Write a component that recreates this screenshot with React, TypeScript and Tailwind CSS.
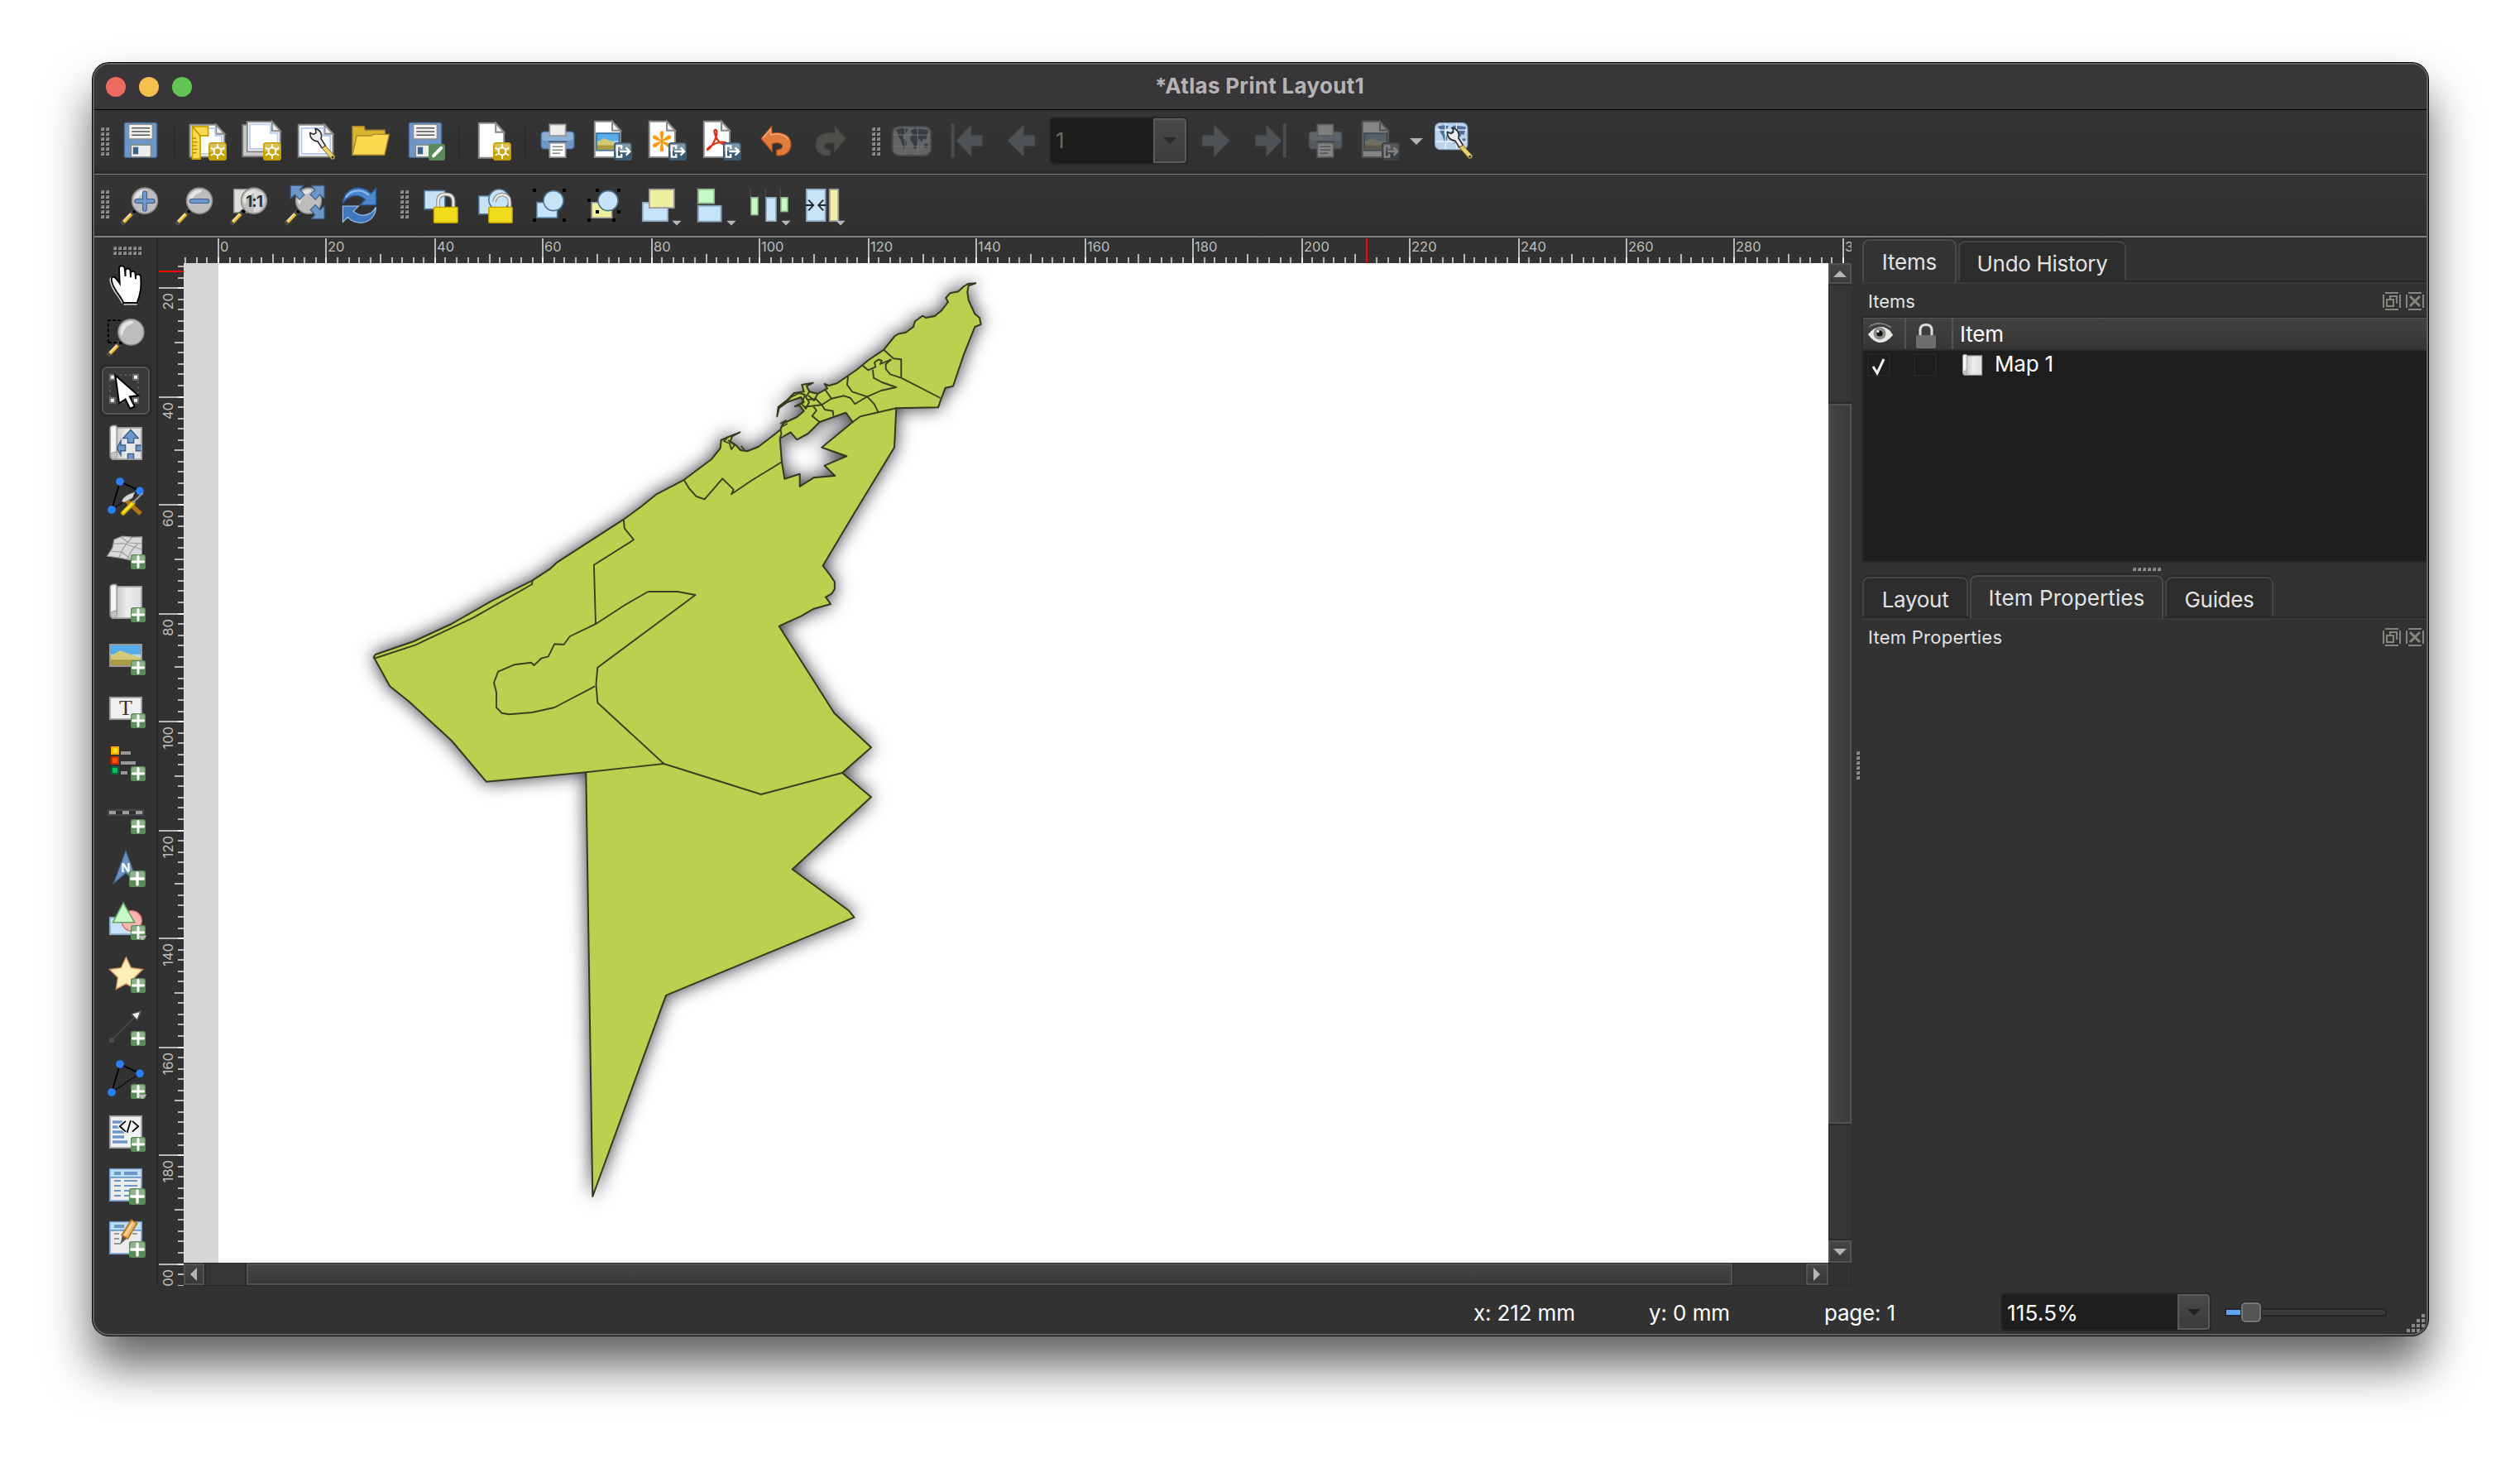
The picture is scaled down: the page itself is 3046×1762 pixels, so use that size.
import type { ReactNode } from "react";

/* ---------- icon building blocks (24-unit grid, shown at 48px) ---------- */

function Ico({ children, dim }: { children: ReactNode; dim?: boolean }) {
  return (
    <svg viewBox="0 0 24 24" className={dim ? "h-12 w-12 shrink-0 overflow-visible opacity-40 grayscale-[60%]" : "h-12 w-12 shrink-0 overflow-visible"}>
      {children}
    </svg>
  );
}

function Dots({ cols, rows }: { cols: number; rows: number }) {
  const cells = [];
  for (let r = 0; r < rows; r++)
    for (let c = 0; c < cols; c++)
      cells.push(
        <g key={r + "-" + c}>
          <rect x={c * 6} y={r * 6} width={4} height={4} fill="#8e8e8e" />
          <rect x={c * 6} y={r * 6} width={2} height={2} fill="#6a6a6a" />
        </g>
      );
  return (
    <svg width={cols * 6 - 2} height={rows * 6 - 2} className="shrink-0">
      {cells}
    </svg>
  );
}

const PlusBadge = ({ big }: { big?: boolean }) => (
  <g transform={big ? "translate(14 14) scale(1.1111)" : "translate(15 15)"}>
    <rect width="9" height="9" rx="1.4" fill="#598c59" />
    <path d="M.6 5V1.6Q.6.6 1.6.6H7.4Q8.4.6 8.4 1.6V4Z" fill="#8fb18c" />
    <path d="M4.5 1.3V7.7M1.2 4.5H7.8" stroke="#fff" strokeWidth="1.5" strokeLinecap="round" />
  </g>
);

const NewBadge = () => (
  <g transform="translate(13 13)">
    <rect width="11" height="11" rx="1.8" fill="#c4a000" />
    <path d="M.8 5.8V2Q.8.8 2 .8H9Q10.2.8 10.2 2V5Z" fill="#d9c05a" />
    <path d="M5.5 1V10M1.4 3.3L9.6 7.9M9.6 3.3L1.4 7.9" stroke="#fff" strokeWidth=".9" />
    <circle cx="5.5" cy="5.5" r="2.2" fill="#c9aa20" stroke="#fff" strokeWidth="1" />
  </g>
);

const ExportBadge = () => (
  <g transform="translate(13 13)">
    <rect width="11" height="11" rx="1.8" fill="#3b5a72" />
    <path d="M.8 5.5V2Q.8.8 2 .8H9Q10.2.8 10.2 2V4.5Z" fill="#7d95a6" />
    <path d="M4.6 4V2.2H1.9V8.8H4.6V7M3.6 5.5H9.6M7.3 3.2L9.6 5.5L7.3 7.8" fill="none" stroke="#fff" strokeWidth="1.2" />
  </g>
);

const Save = () => (
  <>
    <rect x="2.2" y="1.2" width="19.6" height="21" rx="1.2" fill="#6c97c8" stroke="#4a6d98" strokeWidth=".7" />
    <rect x="4.8" y="2.2" width="14.4" height="8.8" rx=".6" fill="#f0f0ee" stroke="#8a8a88" strokeWidth=".7" />
    <path d="M6.6 4.4H17.6M6.6 6.5H17.6M6.6 8.6H17.6" stroke="#555" strokeWidth=".8" />
    <rect x="6.2" y="14.6" width="12" height="7.2" rx=".5" fill="#eeeeec" stroke="#888a85" strokeWidth=".7" />
    <rect x="7.4" y="15.8" width="3.2" height="4.4" fill="#3d6288" />
  </>
);

const Page = ({ x, y, w, h }: { x: number; y: number; w: number; h: number }) => (
  <>
    <path d={`M${x} ${y}H${x + w - 5}L${x + w} ${y + 5.5}V${y + h}H${x}Z`} fill="#fff" stroke="#8a8a8a" strokeWidth="1" />
    <path d={`M${x + w - 5} ${y}V${y + 5.5}H${x + w}Z`} fill="#eee" stroke="#8a8a8a" strokeWidth="1" />
  </>
);

const Wrench = ({ t }: { t: string }) => (
  <g transform={t}>
    <path d="M-3.6 -1.6L-1.4 -.6L0 -1.6L-.4 -4.1A4.6 4.6 0 0 1 3 2L5.8 6.4L3.6 7.7L1 3.6A4.6 4.6 0 0 1 -3.6 -1.6Z" fill="#efefef" stroke="#2e2e2e" strokeWidth=".8" />
    <path d="M3.6 7.7L5.8 6.4L11.4 12.6Q11.6 14.6 9.4 14.4Z" fill="#e9d16c" stroke="#7c6a25" strokeWidth=".5" />
    <circle cx="10" cy="13.2" r=".7" fill="#222" />
  </g>
);

const Printer = () => (
  <>
    <rect x="2" y="6.5" width="20" height="10.5" rx="2" fill="#6c97c8" stroke="#456a96" strokeWidth=".6" />
    <rect x="2.6" y="7" width="18.8" height="5" rx="1.2" fill="#8db0d8" />
    <rect x="7.2" y="2.2" width="9.6" height="6.8" fill="#eee" stroke="#999" strokeWidth=".9" />
    <path d="M6.5 12.8H17.5" stroke="#3c5677" strokeWidth="1" />
    <rect x="7.2" y="13.4" width="9.6" height="8.6" fill="#fff" stroke="#999" strokeWidth=".9" />
    <path d="M8.8 15.6H15.2M8.8 17.6H15.2M8.8 19.6H13.6" stroke="#888" strokeWidth=".8" />
  </>
);

const Picture = ({ x, y, w, h }: { x: number; y: number; w: number; h: number }) => (
  <>
    <rect x={x} y={y} width={w} height={h} fill="#55aeea" />
    <rect x={x} y={y + h * 0.45} width={w} height={h * 0.25} fill="#b7d9ee" />
    <path d={`M${x} ${y + h * 0.52}L${x + w * 0.3} ${y + h * 0.26}L${x + w} ${y + h * 0.62}V${y + h}H${x}Z`} fill="#d3c878" />
    <path d={`M${x} ${y + h * 0.72}H${x + w}V${y + h}H${x}Z`} fill="#ab9940" />
  </>
);

const ImagePage = () => (
  <>
    <Page x={1.4} y={0.4} w={15.6} h={21.6} />
    <rect x="2.1" y="7.1" width="14.6" height="11.2" fill="#3e6f9a" />
    <Picture x={3} y={8} w={12.8} h={9.4} />
    <ExportBadge />
  </>
);

const Magnifier = () => (
  <>
    <path d="M1.4 22.6L8 15.8" stroke="#4b4b4b" strokeWidth="3" strokeLinecap="round" />
    <path d="M1.8 22.2L6.4 17.4" stroke="#f5c32c" strokeWidth="1.8" />
    <path d="M1.4 21.6L5.8 17" stroke="#fde9c0" strokeWidth=".7" />
    <circle cx="8.2" cy="15.8" r="1.1" fill="#000" />
    <circle cx="14.5" cy="9.3" r="7.8" fill="#bdbdbd" stroke="#8a8a8a" strokeWidth=".7" />
    <path d="M8 9A6.5 6.5 0 0 1 15 2.6Q17 2.8 15 4.4Q10 6 9.4 11Q8.4 12 8 9Z" fill="#e4e4e4" />
  </>
);

const Continents = ({ fill }: { fill: string }) => (
  <path
    d="M2 5.5L6 4.4L10 5L8.5 7.4L7 8.6L6.6 10.4L8.6 12L9 14L7.4 17.6L6.4 14.5L5.4 11.5L4 9.5L3.6 7ZM11.4 6L14 4.6L18 5L22 5.6L21.4 9L20.4 11.5L19 10.5L18 13L16.8 10.8L15.6 12.8L15 16L13.6 17.6L12.8 13.6L11.4 12L11.2 9.6L12.4 8.2ZM19.4 14L21.6 13.6L22 16L20 16.4Z"
    fill={fill}
  />
);

const Roll = () => (
  <>
    <defs>
      <linearGradient id="paper" x1="0" x2="1">
        <stop offset="0" stopColor="#bdbdbd" />
        <stop offset=".5" stopColor="#ececec" />
        <stop offset="1" stopColor="#dedede" />
      </linearGradient>
    </defs>
    <path d="M6 2.4H21.6V21.6H4Z" fill="url(#paper)" stroke="#9a9a9a" strokeWidth=".9" />
    <path d="M2.6 2.2Q3.4.8 6 1.2L6.6 2V17Q3.6 17.4 3.6 19.2Q3.6 21 6 21.4H4Q2.6 21 2.6 19Z" fill="#f4f4f4" stroke="#9a9a9a" strokeWidth=".8" />
    <path d="M2.8 19Q3 17 6.4 17.2Q7.4 18.6 6.2 20.4Q5 22 3.6 21.2Z" fill="#c4c4c4" stroke="#999" strokeWidth=".5" />
  </>
);

const Triangle = ({ cls }: { cls: string }) => (
  <svg viewBox="0 0 16 8" className={cls}>
    <path d="M0 0H16L8 8Z" fill="currentColor" />
  </svg>
);

const MenuMark = () => <path d="M19.2 21.4H24.8L22 24.2Z" fill="#b9b9b9" />;

const arrowL = "M4.2 12L13.6 2.4V8.8H20.4V15.2H13.6V21.6Z";
const BL = "#c6e3f8";
const BS = "#86a6bd";

const NodeShape = () => (
  <>
    <path d="M20.5 8.7L8.5 3L3.5 20" fill="none" stroke="#000" strokeWidth=".9" />
    <path d="M3.5 20L20.5 8.7" stroke="#000" strokeWidth=".9" strokeDasharray=".9 .7" />
    <circle cx="8.5" cy="3" r="2.4" fill="#2a7fff" />
    <circle cx="20.5" cy="8.7" r="2.4" fill="#2a7fff" />
    <circle cx="3.5" cy="20" r="2.4" fill="#2a7fff" />
  </>
);

const Handles = ({ pts }: { pts: number[][] }) => (
  <>
    {pts.map(([x, y]) => (
      <rect key={x + "," + y} x={x - 1} y={y - 1} width="2" height="2" fill="#000" />
    ))}
  </>
);

const Sep = () => <div className="mr-3.5 ml-4 h-[38px] w-0.5 shrink-0 bg-[#2a2a2a]" />;

/* ------------------------------ toolbars ------------------------------ */

function MainToolbar() {
  return (
    <div className="flex h-[74px] shrink-0 items-center bg-linear-to-b from-[#353535] to-[#303030] pl-2">
      <div className="mt-0.5 mr-3.5">
        <Dots cols={2} rows={6} />
      </div>
      <Ico><Save /></Ico>
      <Sep />
      <div className="flex gap-[18px]">
        <Ico>
          <Page x={1.8} y={2.4} w={20.8} h={19.4} />
          <path d="M4 4.5H17V9H21V20H4Z" fill="none" stroke="#bccdf4" strokeWidth=".9" />
          <path d="M3.2 3.4H12.8V9H8V23H3.2Z" fill="#fbd94e" stroke="#c9a300" strokeWidth=".9" />
          <path d="M3.4 3.6L8 9M3.4 10.6H5.6M3.4 12.8H6.4M3.4 15H5.6M3.4 17.2H6.4M3.4 19.4H5.6" stroke="#b08e00" strokeWidth=".7" />
          <NewBadge />
        </Ico>
        <Ico>
          <rect x=".6" y="2.4" width="18" height="19.2" fill="#c9c9c9" stroke="#777" strokeWidth=".9" />
          <Page x={3.4} y={0.6} w={20} h={18} />
          <path d="M5 2.2H17.4V7.4H21.8V17H5Z" fill="none" stroke="#bccdf4" strokeWidth=".9" />
          <NewBadge />
        </Ico>
        <Ico>
          <Page x={1.4} y={2.4} w={20.8} h={19.4} />
          <path d="M3.2 4.4H16.6V9H20.6V20H3.2Z" fill="none" stroke="#b4c8f4" strokeWidth=".9" />
          <Wrench t="translate(12 8.8)" />
        </Ico>
        <Ico>
          <path d="M1 20.6V3.4H8L8.6 5.6H20.6V9" fill="#dcb52f" stroke="#a8862a" strokeWidth=".7" />
          <path d="M1 20.6L3.6 9H12.5L13.6 8.2H23.2L20.4 20.6Z" fill="#fbd950" stroke="#a8862a" strokeWidth=".7" />
        </Ico>
        <Ico>
          <Save />
          <rect x="14" y="14" width="10" height="10" rx="1.6" fill="#598c59" />
          <path d="M17 21.2L21.6 16.4" stroke="#fff" strokeWidth="2" strokeLinecap="round" />
        </Ico>
      </div>
      <Sep />
      <Ico>
        <Page x={4.4} y={1.4} w={15.2} h={21} />
        <NewBadge />
      </Ico>
      <Sep />
      <div className="flex gap-[18px]">
        <Ico><Printer /></Ico>
        <Ico><ImagePage /></Ico>
        <Ico>
          <Page x={1.4} y={0.4} w={15.6} h={21.6} />
          {[0, 60, 120, 180, 240, 300].map((a) => (
            <g key={a} transform={`rotate(${a} 9 12.4)`}>
              <path d="M8.7 12.4L7.9 8.2A1.2 1.5 0 1 1 10.1 8.2L9.3 12.4Z" fill="#ff9a0c" />
            </g>
          ))}
          <ExportBadge />
        </Ico>
        <Ico>
          <Page x={1.4} y={0.4} w={15.6} h={21.6} />
          <path d="M3.2 17.8C6 16.4 9.4 10 9.2 6.6C9 4.8 7.4 5.2 7.8 7C8.4 10.4 11 14.6 14.8 14.4C17 14 14 12.2 10.6 13C7 13.8 3.6 16.4 3.2 17.8" fill="none" stroke="#ea2a12" strokeWidth="1.1" />
          <ExportBadge />
        </Ico>
        <Ico>
          <path d="M3 10.8L9.4 3.2V7.6C16 6.4 21 9 21 14.2C21 19 17 21.6 12.4 20.8V17.6C15.6 17.6 17.4 14.8 14.4 13.6C13 13 11.2 13.4 9.6 13.8V18.6Z" fill="#e07c3c" stroke="#b6541c" strokeWidth=".6" />
          <path d="M4 10.4L8.8 5V8.4C13 7.4 18 8.2 19.4 11.4" fill="none" stroke="#f3b78c" strokeWidth=".6" />
        </Ico>
        <Ico>
          <g transform="translate(24 0) scale(-1 1)">
            <path d="M3 10.8L9.4 3.2V7.6C16 6.4 21 9 21 14.2C21 19 17 21.6 12.4 20.8V17.6C15.6 17.6 17.4 14.8 14.4 13.6C13 13 11.2 13.4 9.6 13.8V18.6Z" fill="#4c4f4a" stroke="#424540" strokeWidth=".6" />
          </g>
        </Ico>
      </div>
      <div className="mt-0.5 mr-3.5 ml-[26px]">
        <Dots cols={2} rows={6} />
      </div>
      <div className="flex gap-[18px]">
        <Ico>
          <rect x=".4" y="3.4" width="23.2" height="17.6" rx="4" fill="#626466" stroke="#484b4e" strokeWidth=".9" />
          <Continents fill="#3a3d40" />
          <path d="M8 3.8V20.6M15.6 3.8V20.6M1 8.6H23M1 15.4H23" stroke="#6f7173" strokeWidth=".5" />
        </Ico>
        <Ico>
          <rect x="2.8" y="1.8" width="2" height="20.4" fill="#4a4d50" />
          <path d="M6 12L15 2.4V8.8H21.6V15.2H15V21.6Z" fill="#4e5255" stroke="#44474a" strokeWidth=".5" />
        </Ico>
        <Ico><path d={arrowL} fill="#4e5255" stroke="#44474a" strokeWidth=".5" /></Ico>
      </div>
      <div className="mx-2.5 mb-px flex h-[58px] w-[168px] shrink-0 overflow-hidden rounded-md border-2 border-[#282828] bg-[#1d1d1d]">
        <div className="flex flex-1 items-center pl-1.5 font-[Inter] text-[26px] text-[#6a6a6a]">1</div>
        <div className="flex w-10 items-center justify-center rounded-r border-2 border-[#5a5a5a] bg-linear-to-b from-[#484848] to-[#3c3c3c] text-[#2a2a2a]">
          <Triangle cls="h-2 w-4" />
        </div>
      </div>
      <div className="flex gap-[18px]">
        <Ico><path d="M20.2 12L10.8 2.4V8.8H3.6V15.2H10.8V21.6Z" fill="#4e5255" stroke="#44474a" strokeWidth=".5" /></Ico>
        <Ico>
          <rect x="19.4" y="1.8" width="2" height="20.4" fill="#4a4d50" />
          <path d="M18.4 12L9.4 2.4V8.8H2.8V15.2H9.4V21.6Z" fill="#4e5255" stroke="#44474a" strokeWidth=".5" />
        </Ico>
        <Ico dim><Printer /></Ico>
        <Ico dim><ImagePage /></Ico>
      </div>
      <Triangle cls="ml-3 mr-3.5 h-2 w-4 shrink-0 text-[#b4b4b4] mt-0.5" />
      <Ico>
        <rect x=".3" y="1.3" width="19.6" height="16" rx="3" fill="#bfd3ea" stroke="#88a8cc" strokeWidth=".6" />
        <g transform="translate(0 -1.2) scale(.86)">
          <Continents fill="#4d719c" />
        </g>
        <path d="M6.6 1.6V17M13.2 1.6V17M.6 5.6H19.6M.6 12.6H19.6" stroke="#f3f7fb" strokeWidth=".6" />
        <Wrench t="translate(11.4 8.4)" />
      </Ico>
    </div>
  );
}

function ActionsToolbar() {
  return (
    <div className="flex h-[72px] shrink-0 items-center bg-linear-to-b from-[#353535] to-[#303030] pl-2">
      <div className="mr-3.5">
        <Dots cols={2} rows={6} />
      </div>
      <div className="mt-0.5 flex gap-[18px]">
        <Ico>
          <Magnifier />
          <path d="M14.5 4.6V14.4M9.6 9.5H19.4" stroke="#3d5f8a" strokeWidth="3" strokeLinecap="round" />
          <path d="M14.5 4.6V14.4M9.6 9.5H19.4" stroke="#6c97c8" strokeWidth="2" strokeLinecap="round" />
        </Ico>
        <Ico>
          <Magnifier />
          <path d="M9.8 9.5H19.2" stroke="#3d5f8a" strokeWidth="3" strokeLinecap="round" />
          <path d="M9.8 9.5H19.2" stroke="#6c97c8" strokeWidth="2" strokeLinecap="round" />
        </Ico>
        <Ico>
          <rect x="2.4" y="2.4" width="11" height="14" fill="#dfdfda" stroke="#999" strokeWidth=".7" />
          <Magnifier />
          <path d="M14.5 2.6L20 4.6L21 10L18 15L14.5 16.4Z" fill="#dadada" />
          <text x="14.5" y="13" textAnchor="middle" fontFamily="Inter" fontWeight="700" fontSize="9.6" letterSpacing="-.5" fill="#2e3436">1:1</text>
        </Ico>
        <Ico>
          <Magnifier />
          <path d="M3.6.2H11.4L9.2 2.6L12 5.6L9 8.6L6.2 5.6L3.6 8Z" fill="#6c97c8" stroke="#3d5f8a" strokeWidth=".6" />
          <path d="M24 .2H16.2L18.4 2.6L15.6 5.6L18.6 8.6L21.4 5.6L24 8Z" fill="#6c97c8" stroke="#3d5f8a" strokeWidth=".6" />
          <path d="M24 20.2H16.2L18.4 17.8L15.6 14.8L18.6 11.8L21.4 14.8L24 12.4Z" fill="#6c97c8" stroke="#3d5f8a" strokeWidth=".6" />
        </Ico>
        <Ico>
          <path d="M2.2 11C2.4 4.8 7 1.4 12 1.6C15.4 1.8 17.6 3.2 19.2 5L22.2 2V11.8H12.8L15.8 8.6C12 4.8 5.4 5.4 2.2 11Z" fill="#4a86cc" stroke="#2e5f9c" strokeWidth=".7" />
          <path d="M22.2 13.2C22 19.4 17.4 22.8 12.4 22.6C9 22.4 6.8 21 5.2 19.2L2.2 22.2V12.6H11.6L8.6 15.6C12.4 19.4 19 18.8 22.2 13.2Z" fill="#3f78bd" stroke="#9cc0e8" strokeWidth=".6" />
          <path d="M4 7.4C6.4 3 13 1.4 18 6" fill="none" stroke="#8fb9e6" strokeWidth="1" />
        </Ico>
      </div>
      <div className="mr-4 ml-[26px]">
        <Dots cols={2} rows={6} />
      </div>
      <div className="mt-0.5 flex gap-[18px]">
        <Ico>
          <rect x="1.5" y="3.2" width="12.4" height="11.2" fill={BL} stroke="#4f7593" strokeWidth=".8" />
          <path d="M9.8 13.5V9.6Q9.8 5.4 14.4 5.4Q19 5.4 19 9.6V13.5" fill="none" stroke="#8f8f8a" strokeWidth="2.4" />
          <path d="M9.8 13.5V9.6Q9.8 5.4 14.4 5.4Q19 5.4 19 9.6V13.5" fill="none" stroke="#e8e8e4" strokeWidth="1.3" />
          <rect x="7.2" y="13.2" width="14.4" height="9.4" rx=".6" fill="#f0db1c" stroke="#c0a000" strokeWidth=".7" />
        </Ico>
        <Ico>
          <rect x="1.4" y="6.4" width="9" height="11" fill={BL} stroke="#4f7593" strokeWidth=".8" />
          <circle cx="13.6" cy="8.6" r="6.2" fill={BL} stroke="#4f7593" strokeWidth=".8" />
          <path d="M10.6 9.8Q12 5.4 15.6 5.6Q20 6 20 10V13.5" fill="none" stroke="#8f8f8a" strokeWidth="2.4" />
          <path d="M10.6 9.8Q12 5.4 15.6 5.6Q20 6 20 10V13.5" fill="none" stroke="#e8e8e4" strokeWidth="1.3" />
          <rect x="7.4" y="13.2" width="14.2" height="9.4" rx=".6" fill="#f0db1c" stroke="#c0a000" strokeWidth=".7" />
        </Ico>
        <Ico>
          <rect x="3.4" y="10.2" width="12.4" height="9.4" fill={BL} stroke="#4f7593" strokeWidth=".8" />
          <circle cx="13.5" cy="9.3" r="6" fill={BL} stroke="#4f7593" strokeWidth=".8" />
          <Handles pts={[[2, 3], [20, 3], [2, 21], [20, 21]]} />
        </Ico>
        <Ico>
          <rect x="3.6" y="10.4" width="12.2" height="9.2" fill="#f0eea0" stroke="#999" strokeWidth=".8" />
          <circle cx="13.5" cy="9.3" r="6" fill={BL} stroke="#4f7593" strokeWidth=".8" />
          <Handles pts={[[2, 9], [7, 3], [20, 3], [2, 21], [17, 21], [20, 16], [7, 16]]} />
        </Ico>
        <Ico>
          <rect x="1.4" y="10.4" width="15.2" height="11.2" fill={BL} stroke={BS} strokeWidth=".9" />
          <rect x="5.4" y="2.4" width="15" height="11.2" fill="#f0eea0" stroke="#999" strokeWidth=".9" />
          <MenuMark />
        </Ico>
        <Ico>
          <path d="M1.4 1V23" stroke="#484848" strokeWidth=".8" />
          <rect x="2" y="2.4" width="9.6" height="8.4" fill="#c6fbc6" stroke="#8fb98f" strokeWidth=".9" />
          <rect x="2" y="12.4" width="13.8" height="9.4" fill={BL} stroke={BS} strokeWidth=".9" />
          <MenuMark />
        </Ico>
        <Ico>
          <path d="M.6 2V8M9.6 2V8M18.6 2V8" stroke="#484848" strokeWidth=".8" />
          <rect x="1" y="7.4" width="4" height="10.4" fill="#c6fbc6" stroke="#8fb98f" strokeWidth=".8" />
          <rect x="10" y="7.4" width="6" height="14.2" fill={BL} stroke={BS} strokeWidth=".8" />
          <rect x="19" y="7.4" width="4" height="8.4" fill="#c6fbc6" stroke="#8fb98f" strokeWidth=".8" />
          <MenuMark />
        </Ico>
        <Ico>
          <rect x="1.4" y="2.4" width="11.4" height="19.2" fill={BL} stroke={BS} strokeWidth=".9" />
          <rect x="15.4" y="2.4" width="5.2" height="19.2" fill="#f0eea0" stroke="#999" strokeWidth=".9" />
          <path d="M1 12H5.4M2.6 8.8L5.6 12L2.6 15.2M13.2 12H8.6M11.6 8.8L8.6 12L11.6 15.2" fill="none" stroke="#222" strokeWidth=".9" />
          <MenuMark />
        </Ico>
      </div>
    </div>
  );
}

function ToolColumn() {
  return (
    <div className="flex w-[77px] shrink-0 flex-col items-center border-r-2 border-[#282828] pt-[11px]">
      <div className="ml-1">
        <Dots cols={6} rows={2} />
      </div>
      <div className="mt-3 ml-px flex flex-col gap-4">
        <Ico>
          <path d="M10 23.2C8.4 19.4 5.4 16.9 3.8 13C2.5 10 2.3 8.4 3.2 7.8" fill="none" stroke="#ccc" strokeWidth="1" />
          <path d="M10.6 22.9C9 19 6 16.5 4.4 12.5C3.2 9.6 3 8 4 7.4C5.4 6.8 6.6 8.6 8.4 11.4L8 2C8 .2 11 .2 11.3 2L11.8 7V3.4C12 1.8 14.4 1.9 14.7 3.5L15 7.6V5C15.2 3.6 17.4 3.6 17.7 5L18 8.6V6.8C18.2 5.5 20.8 5.4 21 7C21.6 12.4 21.4 17 18.8 22.9Z" fill="#fff" stroke="#000" strokeWidth=".9" />
          <path d="M10.8 23.9H18.8" stroke="#ccc" strokeWidth=".8" />
        </Ico>
        <Ico>
          <path d="M1.4 15V1.6H9M1.4 15H8" fill="none" stroke="#000" strokeWidth=".9" strokeDasharray="2 1.2" />
          <g transform="translate(.7 -.6)"><Magnifier /></g>
        </Ico>
        <div className="-mx-2 -my-2 flex h-16 w-16 items-center justify-center">
          <div className="flex h-[62px] w-[62px] items-center justify-center rounded-lg border-2 border-[#272727] bg-[#3a3a3a] shadow-[inset_0_0_0_2px_#555]">
            <Ico>
              <rect x="2.4" y="2.6" width="17" height="16.6" fill="none" stroke="#6a6a6a" strokeWidth=".7" strokeDasharray="1 2" />
              {[[3.9, 3.9], [18, 3.9], [3.9, 17.9], [18, 17.9]].map(([x, y]) => (
                <g key={x + "," + y}>
                  <rect x={x - 2} y={y - 2} width="4" height="4" fill="#6a6a6a" />
                  <rect x={x - 1} y={y - 1} width="2" height="2" fill="#eee" />
                </g>
              ))}
              <path d="M5.7 2.7L19.6 15L14.4 15.7L17.4 21.6L14.6 23L11.8 17.2L8 19.8Z" fill="#fff" stroke="#000" strokeWidth="1" />
            </Ico>
          </div>
        </div>
        <Ico>
          <Roll />
          <path d="M15 3.6L19.6 8.8H16.8V11.6H13.2V8.8H10.4ZM7 14L9 10.4V13H11.8V16.4H9V19L7 15.6ZM21.2 13H18.2V16.4H21.2M13.2 21.2V18.2H16.8V21.2" fill="#6c97c8" stroke="#3d5f8a" strokeWidth=".7" />
        </Ico>
        <Ico>
          <NodeShape />
          <path d="M12 14L21 22.4" stroke="#b87514" strokeWidth="2.6" />
          <path d="M10.4 22L16.4 16" stroke="#c9a300" strokeWidth="2.8" strokeLinecap="round" />
          <path d="M10.6 21.6L16 16.2" stroke="#f7e02e" strokeWidth="1.5" strokeLinecap="round" />
          <path d="M16 16L22.2 10" stroke="#9a9a9a" strokeWidth="1" />
          <path d="M9.6 14.8Q11 11 17.6 9.4L16 13L11 15.6Z" fill="#d8d8d8" stroke="#777" strokeWidth=".4" />
        </Ico>
        <Ico>
          <path d="M5 6L10 4L16 4.6L21.8 4.4L21.6 18L15 18.4L8 17L.8 16L4 11Z" fill="#d9d9d9" stroke="#9a9a9a" strokeWidth=".6" />
          <path d="M9 4.4L13.6 8L22 8.6M4.6 8.6L10.6 8.4L21.6 12M3 13L9.6 13.6L15 17.8M16 4.6L12.6 8L9.4 13.4L8 17M19.4 8.4L16 12L13 17.6" fill="none" stroke="#9e9e9e" strokeWidth=".6" />
          <PlusBadge />
        </Ico>
        <Ico><Roll /><PlusBadge /></Ico>
        <Ico>
          <rect x="2" y="5" width="20" height="14" fill="#999" />
          <Picture x={3} y={6} w={18} h={12} />
          <PlusBadge />
        </Ico>
        <Ico>
          <rect x="2.4" y="5.4" width="19.2" height="13.2" fill="#efefef" stroke="#999" strokeWidth=".9" />
          <text x="12" y="16" textAnchor="middle" fontFamily="Liberation Serif" fontSize="13" fill="#333">T</text>
          <PlusBadge />
        </Ico>
        <Ico>
          <rect x="3.5" y="3.5" width="4" height="4" fill="#ffe000" stroke="#ffa500" />
          <rect x="3.5" y="9.5" width="4" height="4" fill="#ff4e00" stroke="#c22d00" />
          <rect x="3.5" y="15.5" width="4" height="4" fill="#00c060" stroke="#006040" />
          <path d="M9 7H15M9 13H18M9 19H13" stroke="#999" strokeWidth="2" />
          <PlusBadge />
        </Ico>
        <Ico>
          <rect x="1" y="9" width="22" height="4" fill="#454545" />
          <path d="M2 11H22" stroke="#2f2f2f" strokeWidth="2" />
          <path d="M2 11H6M10 11H14M18 11H22" stroke="#9c9c9c" strokeWidth="2" />
          <PlusBadge />
        </Ico>
        <Ico>
          <path d="M12 1.8L19.6 22.2L12 15.6L4.4 22.2Z" fill="#6791c0" stroke="#3d5570" strokeWidth=".6" />
          <text x="12" y="14.8" textAnchor="middle" fontFamily="Inter" fontWeight="700" fontSize="7.4" fill="#fff">N</text>
          <PlusBadge big />
        </Ico>
        <Ico>
          <rect x="2.4" y="10.4" width="13" height="10.2" fill={BL} stroke={BS} strokeWidth=".9" />
          <circle cx="15.6" cy="12.4" r="6.1" fill="#fbb4b4" stroke="#d9686e" strokeWidth=".7" />
          <path d="M10.5 1.6L17.4 13.4H4.2Z" fill="#c6fbc6" stroke="#64a064" strokeWidth=".8" />
          <PlusBadge />
          <MenuMark />
        </Ico>
        <Ico>
          <path d="M12.2 2.4L15.2 8.8L22.2 9.8L17.2 14.8L18.4 21.8L12.2 18.4L6.2 21.6L7.2 14.6L2.2 9.8L9.2 8.8Z" fill="#fceeb4" stroke="#d59a62" strokeWidth=".7" />
          <PlusBadge />
        </Ico>
        <Ico>
          <rect x="2" y="19" width="3" height="3" fill="#4b4b4b" />
          <path d="M3.5 20.5L18 6" stroke="#4b4b4b" strokeWidth=".8" />
          <path d="M22 2.2L19 9L14.8 4.6Z" fill="#555" />
          <path d="M20.4 3.6L18.8 7.8L16 4.8Z" fill="#f4f4f4" />
          <PlusBadge />
        </Ico>
        <Ico><NodeShape /><PlusBadge /><MenuMark /></Ico>
        <Ico>
          <rect x="2.4" y="2.4" width="19.2" height="19.2" fill="#f1f1f1" stroke="#999" strokeWidth=".9" />
          <path d="M4 6H10M4 9H9M4 12H11M4 15H11M4 18H13" stroke="#6c97c8" strokeWidth="1.8" />
          <path d="M12.4 5.4L8.6 8.6L12.4 11.8M15.6 5L13 12.4M16 5.4L19.6 8.6L16 11.8" fill="none" stroke="#f1f1f1" strokeWidth="2.4" />
          <path d="M12 5.4L8.4 8.6L12 11.8M15 5L12.8 12.4M16 5.4L19.6 8.6L16 11.8" fill="none" stroke="#000" strokeWidth=".9" />
          <PlusBadge />
        </Ico>
        <Ico>
          <rect x="2.4" y="2.4" width="19.2" height="19.2" fill="#ececec" stroke="#6c97c8" strokeWidth=".9" />
          <path d="M2.8 4.9H21.2" stroke="#bcdcf0" strokeWidth="4.2" />
          <path d="M5 5H9M11 5H19" stroke="#6c97c8" strokeWidth="2" />
          <path d="M2.4 7.4H21.6M5 9.5H9M11 9.5H19M5 12.5H9M11 12.5H19M5 15.5H9M11 15.5H19M5 18.5H9M11 18.5H14" stroke="#6c97c8" strokeWidth=".9" />
          <PlusBadge big />
        </Ico>
        <Ico>
          <rect x="2.4" y="2.4" width="19.2" height="19.2" fill="#ececec" stroke="#6c97c8" strokeWidth=".9" />
          <path d="M2.8 4.9H21.2" stroke="#bcdcf0" strokeWidth="4.2" />
          <path d="M5 5H11" stroke="#6c97c8" strokeWidth="2" />
          <path d="M2.4 7.4H21.6" stroke="#6c97c8" strokeWidth=".9" />
          <path d="M5 9.5H8M16 9.5H19M5 12.5H8M5 15.5H9" stroke="#999" strokeWidth=".9" />
          <path d="M8.8 15.8L9.8 10.6L12.8 12.2Z" fill="#555" />
          <path d="M9.6 10.4L15.4 1.2L18.8 3.2L13.2 12.6Z" fill="#e9b56a" stroke="#b86f14" strokeWidth=".8" />
          <path d="M11.4 10.6L16.4 2.6" stroke="#fbe0b4" strokeWidth="1" />
          <PlusBadge big />
        </Ico>
      </div>
    </div>
  );
}

/* ------------------------------- rulers ------------------------------- */

const H_MM = Array.from({ length: 155 }, (_, i) => i * 2 - 6);
const V_MM = Array.from({ length: 96 }, (_, i) => i * 2 + 16);

function TopRuler() {
  return (
    <svg width="2016" height="31" className="block shrink-0" fontFamily="Inter" fontSize="16.5">
      {H_MM.map((mm) => {
        const x = 41 + 2 * Math.round(3.2731 * mm);
        const h = mm % 20 === 0 ? 30 : mm % 10 === 0 ? 11 : 7;
        return (
          <g key={mm}>
            <rect x={x} y={31 - h} width="2" height={h} fill="#b9b9b9" />
            {mm % 20 === 0 && <rect x={x} y="24" width="2" height="7" fill="#efefef" />}
            {mm % 20 === 0 && <text x={x + 3} y="17" fill="#bdbdbd">{mm}</text>}
          </g>
        );
      })}
      <rect x="1429" y="1" width="2" height="30" fill="#f00" />
    </svg>
  );
}

function SideRuler() {
  return (
    <svg width="30" height="1236" className="block shrink-0" fontFamily="Inter" fontSize="16.5">
      {V_MM.map((mm) => {
        const y = 2 * Math.round(174.05 + 3.275 * (mm - 20)) - 1 - 318;
        const w = mm % 20 === 0 ? 30 : mm % 10 === 0 ? 11 : 7;
        return (
          <g key={mm}>
            <rect x={30 - w} y={y} width={w} height="2" fill="#b9b9b9" />
            {mm % 20 === 0 && <rect x="23" y={y} width="7" height="2" fill="#efefef" />}
            {mm % 20 === 0 && (
              <text transform={`translate(16.5 ${y + 7}) rotate(-90)`} textAnchor="end" fill="#bdbdbd">{mm}</text>
            )}
          </g>
        );
      })}
      <rect x="0" y="9" width="30" height="2" fill="#f00" />
    </svg>
  );
}

/* ------------------------------- canvas ------------------------------- */

const OUTLINE =
  "M1179.3 342.3L1170.7 345.3L1169.3 353L1170.7 362.7L1174 370L1178.3 379.3L1184 384L1185.7 392L1178.3 395L1165 428.3L1152 466.7L1142.7 468.7L1138.3 480L1134 492.3L1083.3 493.3L1081 540.7L1032.7 620L994.6 683.7L1003.3 695L1008.9 703.3L1008.9 711.7L1005.4 717.3L998 721.7L1004.1 730L983.7 735.7L968.6 744.3L941.7 756.7L1008.5 862L1053 903.3L1018 934L1053 963.3L957.7 1050.5L1026 1100.5L1032.5 1108.7L805 1202.8L716.3 1446L708.3 933.2L587.8 944.7L545.8 895L493.7 847.3L471.2 829.3L451.7 794L453.8 791L500.2 775L545.8 754L593.5 726.7L643.3 701.7L665 687.3L673.7 679.3L753.9 627.7L775.6 611.7L792.9 597.7L825.5 580.7L860 555L870.7 541.7L871.7 531.7L880 528.3L894.3 522.3L885 527.3L882.7 533.3L890 538.3L895 544L903.3 545.3L916.7 540L933.3 527.3L943.3 519.3L946.7 511.7L963.3 504L971.7 496.7L966.7 490L961 491L971.7 486L968.3 480L951.7 486L941.7 493.3L939.3 503.3L940.7 491.7L951.7 483.3L960 475L971.7 473.3L969.3 465L982.7 462.7L975 466.7L978.3 473.3L988.3 476L1000 469.3L996.7 464L1002 466L1011.7 463.3L1035 447.3L1050 435L1068.3 422.7L1081.7 406L1086 403.5L1095 401.7L1104 395L1106 388.3L1115 381.7L1119 384L1130 382L1138.3 375L1146 365L1143.3 360L1148.3 354.3L1158.3 352.3L1165 346L1170.7 342.7Z";
const ENCLAVE =
  "M942.7 530L955.7 522.3L963.3 531.3L976.7 524L990.7 510L1022.3 498.7L1030.7 510L993.3 540.7L1023.3 551.3L996.7 562.7L1009.3 575L983.3 577.3L966.7 588V572.7L948.3 578.7L945 558.3Z";
const BORDERS = [
  "M451.7 796L502.4 779.3L571.8 746.7L643.3 706V701.7",
  "M753.9 627.7L754.8 638.3L766 652.3L717.9 682.7L720 754",
  "M783.4 715H819L840.6 719L722.3 806.7L720.5 826.7L722.3 849.3L802.5 923L920 960L1018 934M802.5 923L708.3 933.2",
  "M783.4 715L756 730.7L721.4 753.3L688.9 769L681.5 779L670.2 778.3L662.8 793.3L654.2 795.7L645.5 804L642 800.7L621.6 803.3L602.1 811.7L597 825L600 836.7V855L606.5 861.7L615 863.3L643.3 861L670.2 855L719.2 829.3",
  "M826.7 580L833.3 590.7L841.7 600L851.7 603.3L873.3 578.3L886.7 591.7L884 597.3L908.3 580.7L945 558.3",
  "M942.7 530L944.5 524L943.3 519.3",
  "M1030.7 510L1040 503.3L1083.3 493.3",
  "M1068.3 422.7L1080 433.3L1089.3 434.3V456.7L1136.7 481",
  "M1077.3 434.3L1070.7 440V446L1076 452.3L1089.3 456.7",
  "M1042.7 441.7L1049.3 447.3L1058.3 443.3L1057 438L1062 434.5L1066 436L1064 440L1077.3 434.3",
  "M1055 446.7L1056 456.7L1066 462L1083.3 468L1065 472L1048.3 479.3L1033.3 488.3L1028 481L1020 478.3L1005 481.7L993.3 489.3L986 482L976 483",
  "M1025 455L1024 465L1030 473.3L1048.3 479.3L1056.7 488.3L1061.7 498.3",
  "M996.7 470L1005 481.7",
  "M972 491.7L993.3 489.3L997 495L1006.7 496.7L1007.3 502.7",
  "M983.3 491.7L987 496L981.7 502.7L990.7 510",
  "M978.3 473.3L974 480L978 486L974 494L969 488L973 477L966 475L956 480L948 488L958 477",
  "M988.3 476L984 484L977 478M943 512L950 508L944 516L952 512M880 528L875 533L882 536L884 543L888 538L880 532M896 539L900 544",
];

function MapCanvas() {
  return (
    <div className="flex h-[1208px] w-[1988px] shrink-0 bg-white">
      <svg viewBox="222 318 1988 1208" className="h-[1208px] w-[1988px]">
        <rect x="222" y="318" width="42" height="1208" fill="#d6d6d6" />
        <defs>
          <filter id="glow" x="-10%" y="-10%" width="120%" height="120%" colorInterpolationFilters="sRGB">
            <feDropShadow dx="0" dy="0" stdDeviation="10.5" floodColor="#14181e" floodOpacity=".86" />
          </filter>
        </defs>
        <path d={OUTLINE + ENCLAVE} fill="#bdcf4f" fillRule="evenodd" stroke="#35391f" strokeWidth="2" strokeLinejoin="round" filter="url(#glow)" />
        {BORDERS.map((d) => (
          <path key={d} d={d} fill="none" stroke="#3a3f22" strokeWidth="1.9" strokeLinejoin="round" />
        ))}
      </svg>
    </div>
  );
}

const barBtn = "flex shrink-0 items-center justify-center border-2 border-[#525252] bg-linear-to-b from-[#444] to-[#3a3a3a] text-[#b4b4b4]";

function Canvas() {
  return (
    <div className="flex w-[2047px] shrink-0 flex-col pl-px">
      <div className="flex pl-[30px]">
        <TopRuler />
      </div>
      <div className="flex">
        <SideRuler />
        <div className="flex flex-col">
          <MapCanvas />
          <div className="flex h-7 w-[1988px] border-y border-[#272727] bg-[#363636]">
            <div className={barBtn + " w-[25px] pr-0.5"}>
              <Triangle cls="h-[8px] w-4 shrink-0 rotate-90" />
            </div>
            <div className="h-full w-[51px] border-x-2 border-[#2b2b2b]" />
            <div className="h-full w-[1796px] border-2 border-[#525252] bg-linear-to-b from-[#444] to-[#3a3a3a]" />
            <div className="h-full flex-1 border-x border-[#2b2b2b]" />
            <div className={barBtn + " w-[27px] pr-0.5"}>
              <Triangle cls="h-[8px] w-4 shrink-0 -rotate-90" />
            </div>
          </div>
        </div>
        <div className="flex w-7 flex-col bg-[#363636]">
          <div className={barBtn + " h-[25px]"}>
            <Triangle cls="h-2 w-4 rotate-180" />
          </div>
          <div className="h-[145px] border-y-2 border-[#2a2a2a]" />
          <div className="h-[870px] border-2 border-[#525252] bg-linear-to-r from-[#444] to-[#3a3a3a]" />
          <div className="h-[141px] border-y-2 border-[#2a2a2a]" />
          <div className={barBtn + " h-[27px]"}>
            <Triangle cls="h-2 w-4" />
          </div>
          <div className="h-7 border border-[#2a2a2a] bg-[#323232]" />
        </div>
      </div>
    </div>
  );
}

/* ------------------------------- panels ------------------------------- */

const tabOn = "-mb-[4px] flex h-[54px] items-center justify-center rounded-t-lg border-2 border-b-0 border-[#4a4a4a] bg-[#333] shadow-[0_-2px_0_#282828]";
const tabOff = "flex h-[48px] items-center justify-center rounded-t-lg border-2 border-b-0 border-[#454545] bg-[#2d2d2d] shadow-[0_-2px_0_#282828] pt-1.5";

function DockTitle({ text, tracking }: { text: string; tracking: string }) {
  return (
    <div className="flex h-[39px] items-center pt-[3px] pr-[3px] pl-2">
      <span className={"flex-1 text-[22px] text-[#e2e2e2] " + tracking}>{text}</span>
      <svg width="50" height="22" viewBox="0 0 50 22" fill="none" stroke="#85857f" strokeWidth="2">
        <path d="M3 1H19M3 21H19M1 3V19M21 3V19" />
        <path d="M8 5H17V14M5 9H13V17H5ZM9 5V9" />
        <path d="M31 1H47M31 21H47M29 3V19M49 3V19" />
        <path d="M33 5L45 17M45 5L33 17" strokeWidth="3" />
      </svg>
    </div>
  );
}

function SidePanels() {
  return (
    <div className="flex w-[695px] shrink-0">
      <div className="flex w-3 shrink-0 flex-col pt-[621px] pl-1.5">
        <Dots cols={1} rows={6} />
      </div>
      <div className="flex w-[683px] flex-col">
        <div className="flex h-[54px] items-end gap-0.5 border-b-2 border-[#282828] pl-px text-[26px] text-[#e2e2e2]">
          <div className={tabOn + " w-[114px] tracking-[-0.2px]"}>Items</div>
          <div className={tabOff + " w-[203px] tracking-[-0.3px]"}>Undo History</div>
        </div>
        <div className="h-0.5 bg-[#3a3a3a]" />
        <DockTitle text="Items" tracking="tracking-[0px]" />
        <div className="flex h-[298px] flex-col border-2 border-r-0 border-[#292929] bg-[#1e1e1e]">
          <div className="flex h-[38px] shrink-0 border-t border-[#555] bg-linear-to-b from-[#424242] to-[#363636]">
            <div className="flex w-[52px] items-center border-r-2 border-[#555] pl-1.5">
              <svg viewBox="0 0 30 32" className="h-8 w-[30px]">
                <path d="M1 7Q14-1 28 7M3 5Q16-1 27 8" fill="none" stroke="#8c8c8c" strokeWidth="1" />
                <path d="M0 16Q8 6 18 7Q26 9 30 17Q22 27 13 26Q5 24 0 16Z" fill="#e8e8e4" />
                <circle cx="14" cy="15" r="7.5" fill="#8c8c88" />
                <circle cx="14" cy="15" r="3.6" fill="#111" />
                <circle cx="12" cy="12.5" r="1.5" fill="#fff" />
              </svg>
            </div>
            <div className="flex w-[57px] items-end justify-center border-r-2 border-[#555] pr-2">
              <svg viewBox="0 0 24 32" className="h-8 w-6">
                <path d="M5 16V9Q5 2.4 12 2.4Q19 2.4 19 9V16" fill="none" stroke="#dededa" strokeWidth="3" />
                <rect y="15" width="24" height="16" rx="2.5" fill="#6e6e6e" />
              </svg>
            </div>
            <div className="flex items-center pl-2 text-[26px] tracking-[-0.2px] text-white">Item</div>
          </div>
          <div className="h-0.5 shrink-0 bg-[#2b2b2b]" />
          <div className="flex h-[34px] items-center pl-[5px]">
            <div className="flex h-7 w-7 items-center justify-center border-2 border-[#262626]">
              <svg viewBox="0 0 18 22" className="mt-1 h-[22px] w-[18px]">
                <path d="M2 11L7 19L15 2" fill="none" stroke="#eee" strokeWidth="3" />
              </svg>
            </div>
            <div className="ml-7 h-7 w-7 border-2 border-[#262626]" />
            <svg viewBox="2 0 21 23" className="ml-[29px] h-7 w-[29px]">
              <Roll />
            </svg>
            <span className="-mt-0.5 ml-3 text-[26px] tracking-[-0.2px] text-white">Map 1</span>
          </div>
        </div>
        <div className="flex h-[13px] justify-center pt-1.5 pl-1.5">
          <Dots cols={6} rows={1} />
        </div>
        <div className="flex h-[54px] items-end gap-0.5 border-b-2 border-[#282828] pl-px text-[26px] text-[#e2e2e2]">
          <div className={tabOff + " w-[128px] tracking-[-0.3px]"}>Layout</div>
          <div className={tabOn + " w-[234px] tracking-[0.1px]"}>Item Properties</div>
          <div className={tabOff + " w-[131px] tracking-[-0.3px]"}>Guides</div>
        </div>
        <div className="h-0.5 bg-[#3a3a3a]" />
        <DockTitle text="Item Properties" tracking="tracking-[0.25px]" />
      </div>
    </div>
  );
}

function StatusBar() {
  return (
    <div className="flex flex-1 items-center pt-[5px] text-[26px] text-white">
      <span className="ml-[1667px] w-[212px] pt-[3px] tracking-[-0.15px]">x: 212 mm</span>
      <span className="w-[212px] pt-[3px] tracking-[-0.1px]">y: 0 mm</span>
      <span className="w-[213px] pt-[3px] tracking-[-0.2px]">page: 1</span>
      <div className="flex h-[47px] w-[255px] shrink-0 overflow-hidden rounded-md border-2 border-[#282828] bg-[#1e1e1e]">
        <div className="flex flex-1 items-center pt-0.5 pl-1.5 tracking-[0.2px]">115.5%</div>
        <div className="flex w-[39px] items-center justify-center border-2 border-[#5a5a5a] bg-linear-to-b from-[#484848] to-[#3c3c3c] text-[#222]">
          <Triangle cls="h-2 w-4" />
        </div>
      </div>
      <div className="ml-4 flex h-[10px] w-[196px] shrink-0 items-center rounded-sm border-2 border-[#262626] bg-[#3a3a3a]">
        <div className="h-1.5 w-[18px] bg-[#5ba7f7]" />
        <div className="h-6 w-6 rounded-[5px] border-2 border-[#777] bg-[#555] shadow-[0_0_0_1px_#262626]" />
      </div>
      <svg width="24" height="24" className="ml-auto self-end">
        {[[18, 0], [12, 6], [18, 6], [6, 12], [12, 12], [18, 12], [0, 18], [6, 18], [12, 18]].map(([x, y]) => (
          <rect key={x + "," + y} x={x} y={y} width="4" height="4" fill="#8a8a8a" />
        ))}
      </svg>
    </div>
  );
}

export default function App() {
  return (
    <div className="h-[1762px] w-[3046px] overflow-hidden bg-white pt-[76px] pl-[112px] font-[Inter,sans-serif] leading-none">
      <div className="flex h-[1538px] w-[2823px] flex-col overflow-hidden rounded-[20px] border-2 border-[#606060] bg-[#323232] shadow-[0_0_0_1px_#000,0_36px_56px_rgba(0,0,0,0.62)]">
        <div className="grid h-[55px] shrink-0 grid-cols-3 items-center border-b border-black bg-[#393639]">
          <div className="flex gap-4 pl-3.5">
            <div className="h-6 w-6 rounded-full bg-[#ed6a5e]" />
            <div className="h-6 w-6 rounded-full bg-[#f5bf4f]" />
            <div className="h-6 w-6 rounded-full bg-[#61c554]" />
          </div>
          <div className="pr-0.5 pb-[3px] text-center text-[26px] font-bold tracking-[0.3px] text-[#b5b3b5]">*Atlas Print Layout1</div>
        </div>
        <MainToolbar />
        <div className="h-[3px] shrink-0 bg-[#292929]" />
        <div className="h-px shrink-0 bg-[#7c7c7c]" />
        <ActionsToolbar />
        <div className="h-0.5 shrink-0 bg-[#292929]" />
        <div className="h-0.5 shrink-0 bg-[#807c80]" />
        <div className="flex h-[1267px] shrink-0">
          <ToolColumn />
          <Canvas />
          <SidePanels />
        </div>
        <StatusBar />
      </div>
    </div>
  );
}
